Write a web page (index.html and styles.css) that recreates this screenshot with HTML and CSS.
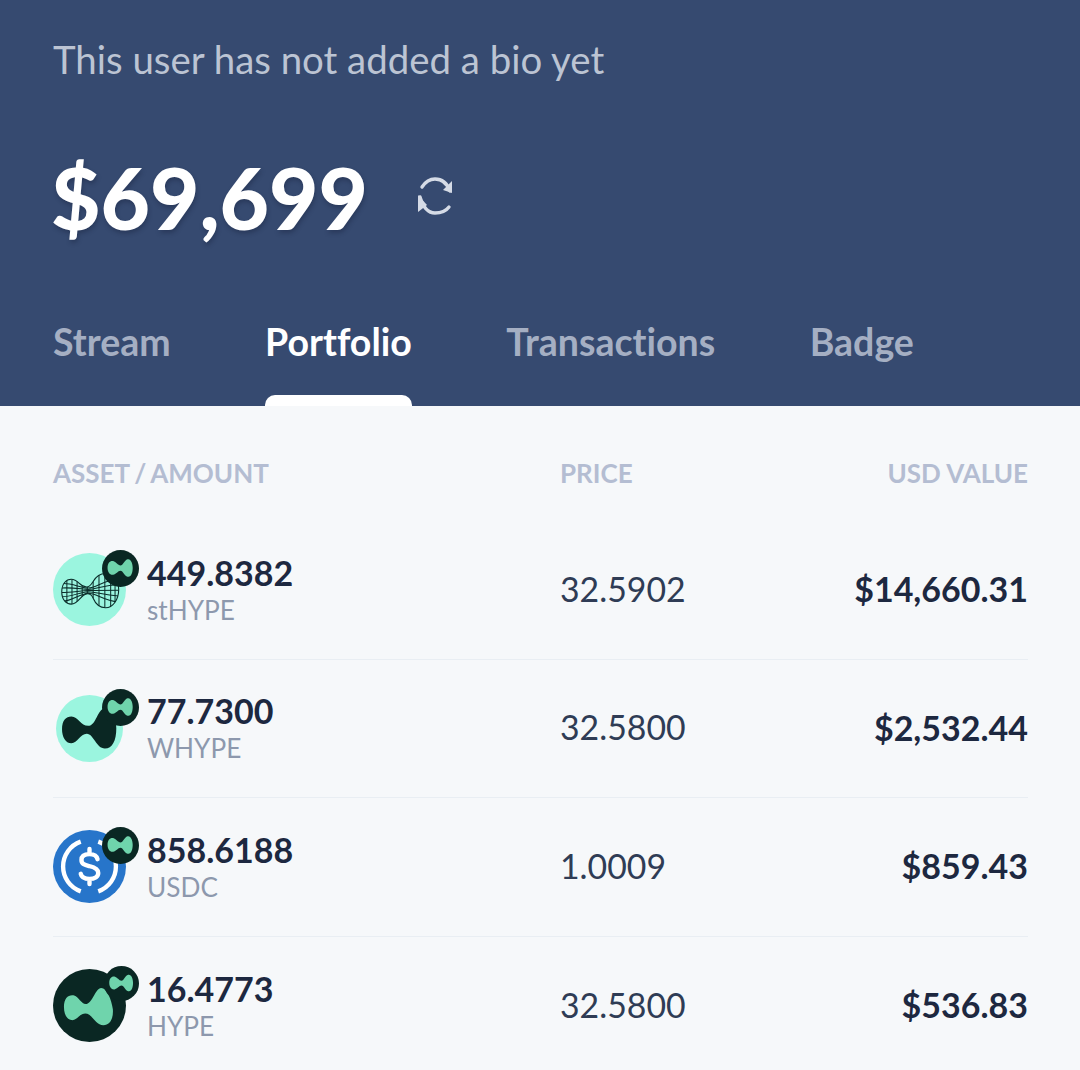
FILE: index.html
```html
<!DOCTYPE html>
<html>
  <head>
    <meta name="viewport" content="width=device-width, initial-scale=1">
    <link rel="stylesheet" href="styles.css">
  </head>
  <body>
    <svg class="defs" width="0" height="0">
      <defs>
        <symbol id="badge" viewBox="0 0 100 100">
          <circle cx="50" cy="50" r="50" fill="#0a2723"/>
          <path fill="#6fd4ac" d="M15 48C15 36 21 29 30 30C38 32 43 42 50 42C57 42 60 28 69 25C78 23 83 36 83 48C83 62 78 75 69 72C60 70 57 56 50 56C43 56 38 66 30 67C21 68 15 60 15 48Z"/>
        </symbol>
        <clipPath id="mesh-clip">
          <path d="M12 53C12 42 18 36 25 36C35 36 36 46 46 46.500C50 46.500 52 44 55 39C59 32 66 28 72 28C82 28 90 38 90 50C90 64 82 75 72 75C64 75 58 69 55 62C53 57 50 55.500 46 56C38 57 35 70 25 70C18 70 12 64 12 53Z"/>
        </clipPath>
      </defs>
    </svg>

    <header class="profile">
      <p class="bio">This user has not added a bio yet</p>
      <div class="balance">
        <span class="amount">$69,699</span>
        <svg class="refresh" viewBox="0 0 40 40" fill="none" stroke="#d5dbe6" stroke-width="3.400" stroke-linecap="round">
          <path d="M6 10C10 4 14 2 19 2C26 2 31 6 34 14"/>
          <path d="M33 30C30 34 25 36 19 36C12 36 7 30 4 20"/>
          <path d="M36 4V16L27 13Z" fill="#d5dbe6" stroke="none"/>
          <path d="M2 18V35L11 28Z" fill="#d5dbe6" stroke="none"/>
        </svg>
      </div>
      <nav class="tabs">
        <a class="tab">Stream</a>
        <a class="tab active">Portfolio</a>
        <a class="tab">Transactions</a>
        <a class="tab">Badge</a>
      </nav>
    </header>

    <main class="table">
      <div class="row head">
        <span class="head-asset">ASSET / AMOUNT</span>
        <span>PRICE</span>
        <span class="right">USD VALUE</span>
      </div>

      <div class="row item">
        <div class="asset">
          <div class="icon">
            <svg class="coin" viewBox="0 0 100 100">
              <circle cx="50" cy="50" r="50" fill="#9bf5df"/>
              <g clip-path="url(#mesh-clip)" stroke="#0b2d2a" stroke-width="1.400" fill="none">
                <path d="M12 42C25 41 36 47 48 48C60 48 68 37 90 36M12 48C25 47 36 49 48 50C60 50 68 44 90 43M12 54C25 54 36 52 48 51.500C60 51 68 51 90 51M12 60C25 60 36 54 48 53C60 53 68 58 90 59M12 66C25 67 36 56 48 55C60 55 68 65 90 67"/>
                <path d="M19 25V80M26 25V80M33 25V80M40 25V80M47 25V80M55 25V80M63 25V80M71 25V80M79 25V80M85 25V80"/>
              </g>
              <path fill="none" stroke="#0b2d2a" stroke-width="1.500" d="M12 53C12 42 18 36 25 36C35 36 36 46 46 46.500C50 46.500 52 44 55 39C59 32 66 28 72 28C82 28 90 38 90 50C90 64 82 75 72 75C64 75 58 69 55 62C53 57 50 55.500 46 56C38 57 35 70 25 70C18 70 12 64 12 53Z"/>
            </svg>
            <svg class="badge"><use href="#badge"/></svg>
          </div>
          <div class="names">
            <div class="qty">449.8382</div>
            <div class="symbol">stHYPE</div>
          </div>
        </div>
        <span class="price">32.5902</span>
        <span class="value right">$14,660.31</span>
      </div>

      <div class="row item">
        <div class="asset">
          <div class="icon">
            <svg class="coin small" viewBox="0 0 100 100">
              <circle cx="50" cy="50" r="50" fill="#9bf5df"/>
              <path fill="#0a2723" d="M9 51C9 38 15 32 23 32C33 32 37 46 48 46C60 46 62 20 73 20C85 20 90 36 90 50C90 68 84 80 73 80C60 80 56 58 46 58C36 58 32 72 23 72C14 72 9 62 9 51Z"/>
            </svg>
            <svg class="badge"><use href="#badge"/></svg>
          </div>
          <div class="names">
            <div class="qty">77.7300</div>
            <div class="symbol">WHYPE</div>
          </div>
        </div>
        <span class="price">32.5800</span>
        <span class="value right">$2,532.44</span>
      </div>

      <div class="row item">
        <div class="asset">
          <div class="icon">
            <svg class="coin" viewBox="0 0 100 100">
              <circle cx="50" cy="50" r="50" fill="#2775ca"/>
              <path fill="none" stroke="#fff" stroke-width="6" d="M38 16A36 36 0 0 0 38 84M62 16A36 36 0 0 1 62 84"/>
              <path fill="none" stroke="#fff" stroke-width="6" stroke-linecap="round" d="M61 40C60 35 56 33 50 33C43 33 39 36 39 41C39 47 44 48 50 49.500C57 51 62 53 62 59C62 64 57 67 50 67C44 67 39 65 38 60M50 26V33M50 67V74"/>
            </svg>
            <svg class="badge"><use href="#badge"/></svg>
          </div>
          <div class="names">
            <div class="qty">858.6188</div>
            <div class="symbol">USDC</div>
          </div>
        </div>
        <span class="price">1.0009</span>
        <span class="value right">$859.43</span>
      </div>

      <div class="row item">
        <div class="asset">
          <div class="icon">
            <svg class="coin" viewBox="0 0 100 100">
              <circle cx="50" cy="50" r="50" fill="#0a2723"/>
              <path fill="#6fd4ac" d="M15 52C15 40 21 35 28 36C36 38 38 48 45 48C54 48 58 26 66 26C74 26 80 42 82 55C83 68 78 77 69 77C58 77 54 61 44 61C36 61 33 71 25 70C19 69 15 62 15 52Z"/>
            </svg>
            <svg class="badge last"><use href="#badge"/></svg>
          </div>
          <div class="names">
            <div class="qty">16.4773</div>
            <div class="symbol">HYPE</div>
          </div>
        </div>
        <span class="price">32.5800</span>
        <span class="value right">$536.83</span>
      </div>
    </main>
  </body>
</html>
```

FILE: styles.css
```css
html, body {
  margin: 0;
  height: 1070px;
  overflow: hidden;
}

body {
  background-color: #f6f8fa;
  font-family: "Lato", "Liberation Sans", sans-serif;
  font-variant-ligatures: none;
}

.defs {
  display: block;
  height: 0;
}

/* Top blue part */
.profile {
  height: 406px;
  box-sizing: border-box;
  padding: 37px 52px 0 53px;
  background-color: #364a70;
  display: flex;
  flex-direction: column;
}

.bio {
  margin: 0;
  font-size: 38.400px;
  line-height: 44px;
  color: #bcc4d3;
}

.balance {
  margin-top: 66px;
  height: 100px;
  display: flex;
  align-items: center;
  gap: 48px;
}

.amount {
  margin-left: -2px;
  font-size: 85.300px;
  font-weight: 900;
  line-height: 100px;
  color: #fff;
  text-shadow: 1px 3px 4px rgba(20, 30, 55, 0.35);
}

.refresh {
  width: 40px;
  height: 40px;
}

.tabs {
  margin-top: auto;
  display: flex;
  gap: 94.500px;
}

.tab {
  position: relative;
  height: 89px;
  font-size: 37.500px;
  font-weight: 700;
  line-height: 50px;
  color: #a5afc3;
}

.tab.active {
  color: #fff;
}

.tab.active:after {
  content: "";
  position: absolute;
  left: 0;
  right: 0;
  bottom: 0;
  height: 11px;
  background-color: #fff;
  border-radius: 10px 10px 0 0;
}

/* Table */
.table {
  padding: 0 52px 0 53px;
}

.row {
  display: grid;
  grid-template-columns: 507px 1fr auto;
  align-items: center;
}

.head {
  height: 115px;
  padding-top: 19px;
  box-sizing: border-box;
  font-size: 26px;
  font-weight: 700;
  color: #b4bdd2;
}

.head-asset {
  word-spacing: -1.500px;
}

.item {
  height: 138.500px;
  border-bottom: 1px solid #e9eef3;
  box-sizing: border-box;
}

.item:last-child {
  border-bottom: none;
}

.right {
  text-align: right;
}

.asset {
  display: flex;
  align-items: center;
}

.icon {
  position: relative;
  width: 94px;
  height: 73px;
  flex-shrink: 0;
}

.coin {
  display: block;
  width: 73px;
  height: 73px;
}

.coin.small {
  width: 67px;
  height: 67px;
  margin: 3px 0 0 3px;
}

.badge {
  position: absolute;
  left: 49px;
  top: -3px;
  width: 37px;
  height: 37px;
}

.badge.last {
  left: 51px;
  width: 35px;
  height: 35px;
}

.names {
  padding-top: 1px;
}

.qty {
  font-size: 34px;
  font-weight: 700;
  line-height: 40px;
  color: #1d2840;
}

.symbol {
  font-size: 26.200px;
  line-height: 35px;
  color: #8d98ad;
}

.price {
  font-size: 33.800px;
  padding-bottom: 2px;
  color: #2f3c55;
}

.value {
  font-size: 34px;
  font-weight: 700;
  padding-bottom: 2px;
  color: #1d2840;
}
```
